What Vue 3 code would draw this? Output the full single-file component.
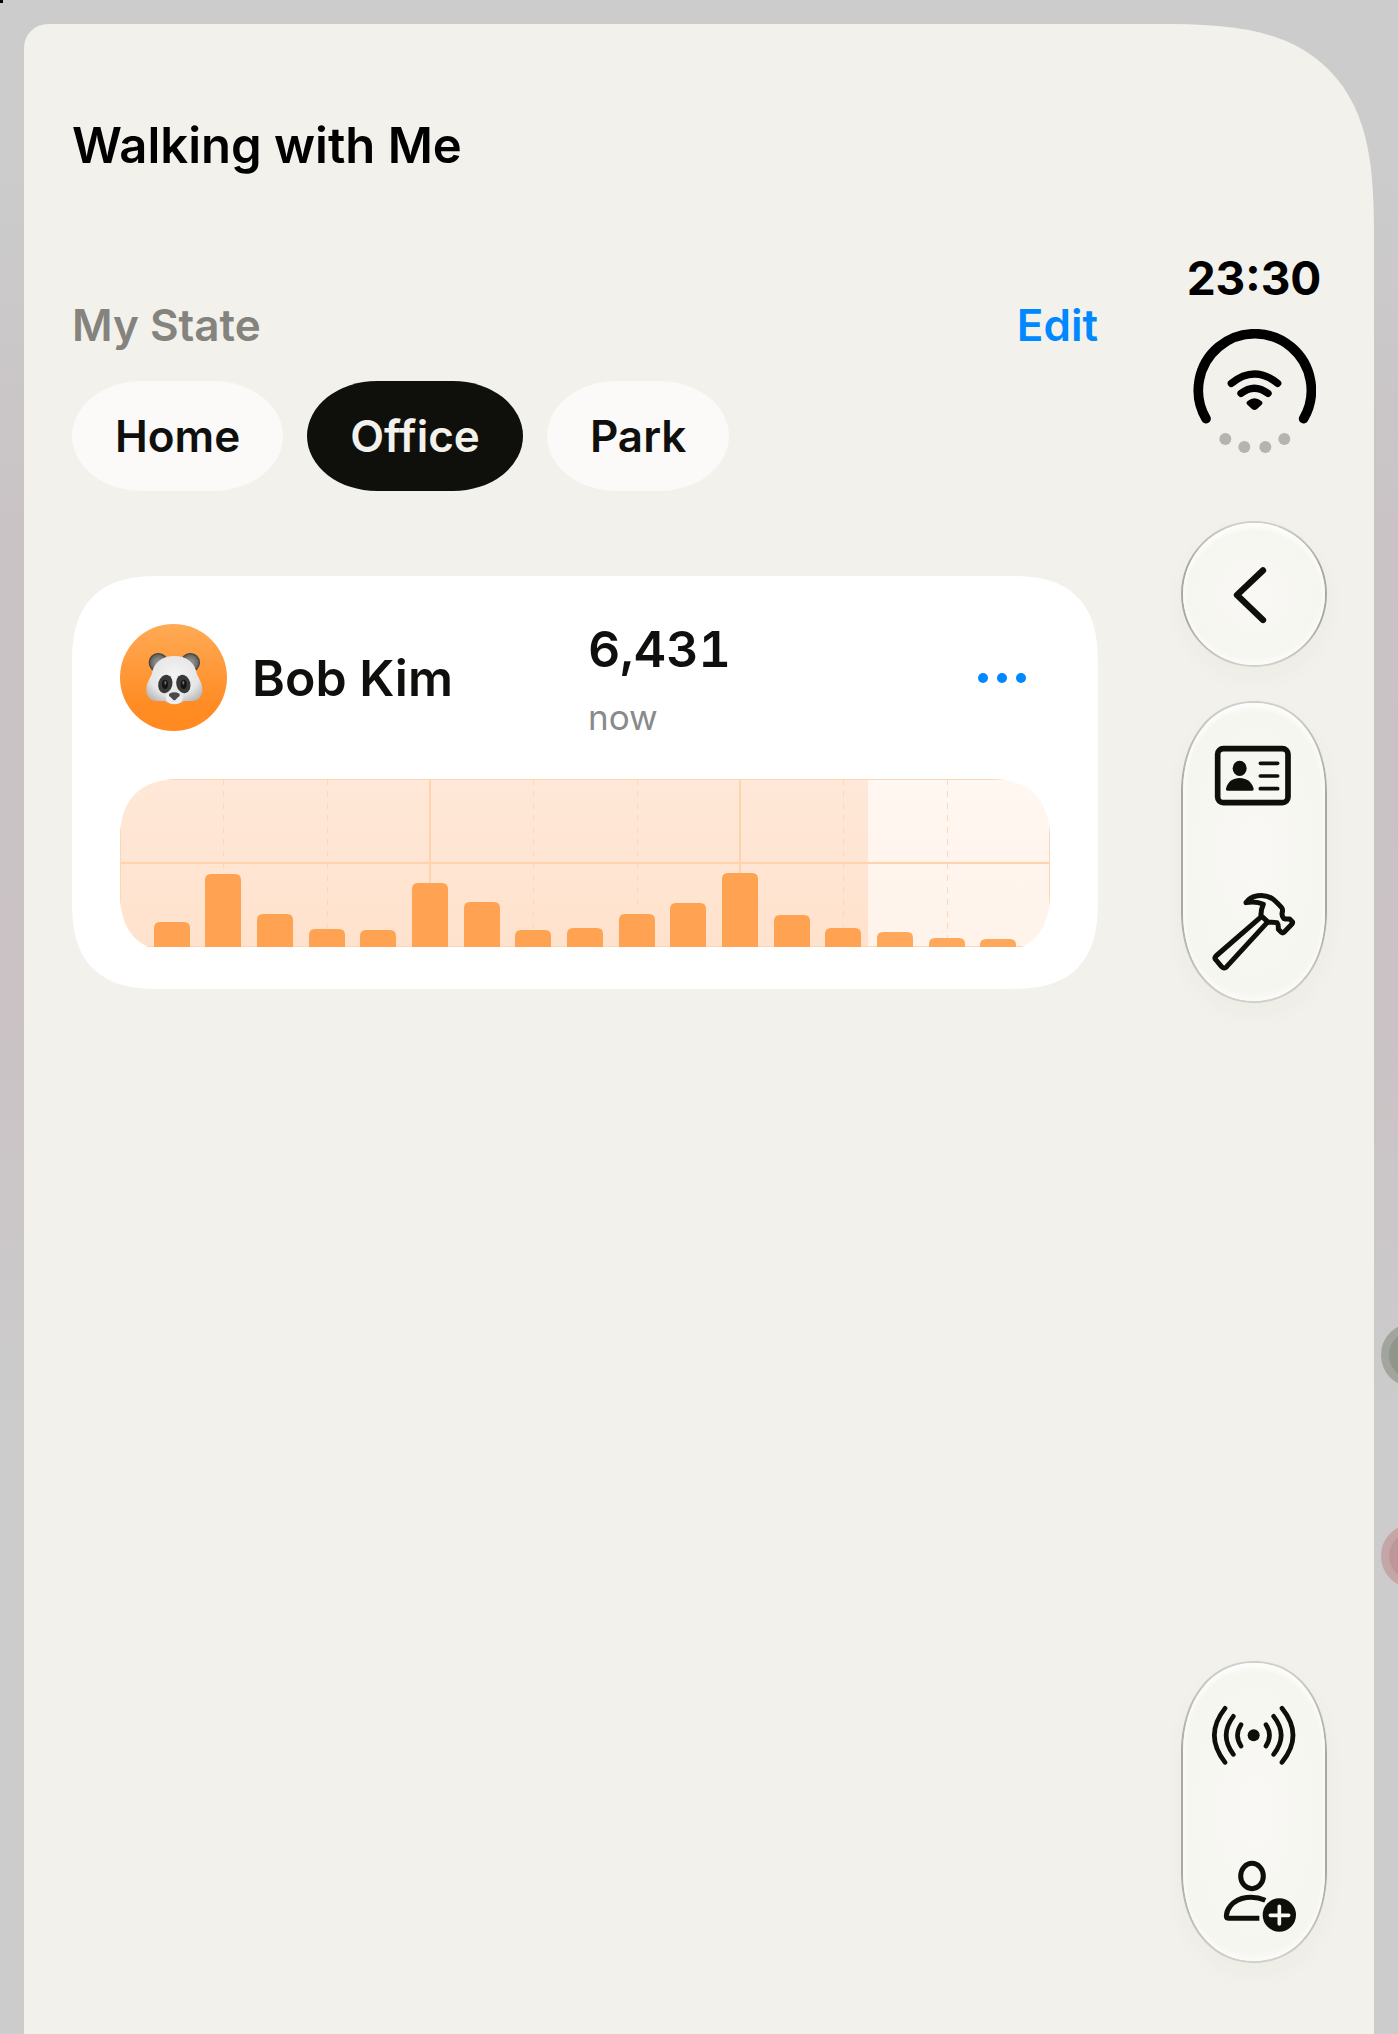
<script setup>
import { ref } from 'vue'

const places = ['Home', 'Office', 'Park']
const current = ref('Office')

const step = 930 / 18
const base = 168
const heights = [25, 73, 33, 18, 17, 64, 45, 17, 19, 33, 44, 74, 32, 19, 15, 9, 8]
const bars = heights.map((h, i) => {
  const x = Math.round(step * (i + 1)) - 18
  const top = base - h
  return `M${x} ${base}V${top + 6}Q${x} ${top} ${x + 6} ${top}H${x + 30}Q${x + 36} ${top} ${x + 36} ${top + 6}V${base}Z`
})
const minorLines = [2, 4, 8, 10, 14, 16].map((n) => Math.round(step * n))
const majorLines = [6, 12].map((n) => Math.round(step * n))
</script>

<template>
  <div class="backdrop">
    <span class="speck"></span>
    <span class="orb orb-green"></span>
    <span class="orb orb-red"></span>

    <div class="sheet">
      <main class="content">
        <h1 class="title">Walking with Me</h1>

        <section class="state">
          <div class="state-head">
            <h2 class="state-label">My State</h2>
            <button class="edit" type="button">Edit</button>
          </div>
          <div class="places">
            <button
              v-for="place in places"
              :key="place"
              type="button"
              class="place"
              :class="{ active: place === current }"
              :aria-pressed="place === current"
              @click="current = place"
            >{{ place }}</button>
          </div>
        </section>

        <article class="card">
          <div class="card-head">
            <div class="person">
              <svg class="avatar" viewBox="30 42 321 321" role="img" aria-label="Panda">
                <defs>
                  <linearGradient id="avatarFill" x1="0" y1="0" x2="0" y2="1">
                    <stop offset="0" stop-color="#ffaa56" />
                    <stop offset="0.75" stop-color="#ff8c24" />
                    <stop offset="1" stop-color="#ff8a20" />
                  </linearGradient>
                  <radialGradient id="faceFill" cx="0.5" cy="0.4" r="0.62">
                    <stop offset="0" stop-color="#f4f4f4" />
                    <stop offset="0.7" stop-color="#e6e6e7" />
                    <stop offset="1" stop-color="#bdbdc0" />
                  </radialGradient>
                  <radialGradient id="earFill">
                    <stop offset="0.3" stop-color="#8b8b88" />
                    <stop offset="0.75" stop-color="#6d6c69" />
                    <stop offset="1" stop-color="#343433" />
                  </radialGradient>
                </defs>
                <circle cx="190.5" cy="202.5" r="160.5" fill="url(#avatarFill)" />
                <circle cx="145" cy="158" r="29" fill="url(#earFill)" />
                <circle cx="241" cy="158" r="29" fill="url(#earFill)" />
                <path d="M193 138C232 138 254 158 260 190C265 206 277 217 277 239C277 262 262 273 240 273H221C213 284 173 284 165 273H146C124 273 109 262 109 239C109 217 121 206 126 190C132 158 154 138 193 138Z" fill="url(#faceFill)" />
                <ellipse cx="166" cy="222" rx="21" ry="28" transform="rotate(14 166 222)" fill="#39393a" />
                <ellipse cx="220" cy="222" rx="21" ry="28" transform="rotate(-14 220 222)" fill="#39393a" />
                <ellipse cx="165" cy="223" rx="9" ry="14" fill="#141414" />
                <ellipse cx="221" cy="223" rx="9" ry="14" fill="#141414" />
                <ellipse cx="166" cy="218" rx="3" ry="6" fill="#6a6a6a" />
                <ellipse cx="220" cy="218" rx="3" ry="6" fill="#6a6a6a" />
                <ellipse cx="193" cy="264" rx="26" ry="19" fill="#ededee" />
                <path d="M178 251Q193 243 208 251Q212 256 204 262L196 270Q193 272 190 270L182 262Q174 256 178 251Z" fill="#4a4a4a" />
              </svg>
              <h3 class="name">Bob Kim</h3>
            </div>
            <div class="steps">
              <span class="count">6,431</span>
              <span class="when">now</span>
            </div>
            <button class="more" type="button" aria-label="More">
              <svg viewBox="0 0 48 12" width="48" height="12" aria-hidden="true">
                <circle cx="5" cy="6" r="5" /><circle cx="24" cy="6" r="5" /><circle cx="43" cy="6" r="5" />
              </svg>
            </button>
          </div>

          <svg class="chart" viewBox="0 0 930 168" role="img" aria-label="Steps through the day">
            <defs>
              <clipPath id="plot">
                <path d="M60 0H870C910 0 930 20 930 60V114C930 154 910 174 870 174H60C20 174 0 154 0 114V60C0 20 20 0 60 0Z" />
              </clipPath>
              <linearGradient id="past" x1="0" y1="0" x2="0" y2="1">
                <stop offset="0" stop-color="#ffe8d8" />
                <stop offset="1" stop-color="#ffe2cd" />
              </linearGradient>
              <linearGradient id="ahead" x1="0" y1="0" x2="0" y2="1">
                <stop offset="0" stop-color="#fff7f1" />
                <stop offset="1" stop-color="#fff3ea" />
              </linearGradient>
            </defs>
            <g clip-path="url(#plot)">
              <rect width="748" height="168" fill="url(#past)" />
              <rect x="748" width="182" height="168" fill="url(#ahead)" />
              <path v-for="x in minorLines" :key="x" :d="`M${x}.5 0V168`" class="minor" />
              <path v-for="x in majorLines" :key="x" :d="`M${x} 0V168`" class="major" />
              <path d="M0 84H930" class="major" />
              <path d="M0 .5H930M0 167.5H930M.5 0V168M929.5 0V168" class="edge" />
              <path v-for="(d, i) in bars" :key="i" :d="d" :class="i > 13 ? 'bar soft' : 'bar'" />
            </g>
          </svg>
        </article>
      </main>

      <aside class="rail">
        <time class="clock">23:30</time>
        <svg class="signal" viewBox="98 267 369 372" role="img" aria-label="Wi-Fi and battery">
          <path d="M137 536A169.500 169.500 0 1 1 430 536" fill="none" stroke="#000" stroke-width="29" stroke-linecap="round" />
          <path d="M213 430Q282 374 352 430" fill="none" stroke="#000" stroke-width="22" stroke-linecap="round" />
          <path d="M242 460Q282 429 323 460" fill="none" stroke="#000" stroke-width="22" stroke-linecap="round" />
          <path d="M262 483Q283 466 303 483Q310 489 303 495L290 507Q282.500 513 275 507L262 495Q255 489 262 483Z" />
          <g fill="#b5b4b0">
            <circle cx="195" cy="597" r="18" /><circle cx="252" cy="621" r="18" />
            <circle cx="315" cy="621" r="18" /><circle cx="372" cy="597" r="18" />
          </g>
        </svg>

        <button class="glass round" type="button" aria-label="Back">
          <svg class="icon" viewBox="138 138 288 288" aria-hidden="true">
            <path d="M309 211L231 285L309 360" class="line" stroke-width="19" />
          </svg>
        </button>

        <div class="glass capsule">
          <button class="tool" type="button" aria-label="Profile card">
            <svg class="icon" viewBox="138 -2 288 288" aria-hidden="true">
              <rect x="173" y="54" width="211" height="162" rx="17" class="line" stroke-width="17" />
              <ellipse cx="239" cy="113" rx="21" ry="23" />
              <path d="M202 180Q197 180 198 174C203 152 220 142 239 142C258 142 275 152 281 174Q282 180 276 180Z" />
              <path d="M301 98H353M301 136H353M301 174H353" class="line" stroke-width="11" />
            </svg>
          </button>
          <button class="tool" type="button" aria-label="Tools">
            <svg class="icon" viewBox="138 446 288 288" aria-hidden="true">
              <path d="M304 559L168 677Q162 683 168 689L184 708Q192 717 200 709L322 576" class="line" stroke-width="15" />
              <path d="M258 517C272 494 311 488 337 505Q344 509 365 532Q369 536 367 545Q364 556 371 564Q378 567 389 566L397 574Q399 577 396 581L372 606Q368 609 364 606L355 597Q356 583 351 577Q341 575 325 576L303 556Q302 540 310 522Q287 511 258 517Z" class="line" stroke-width="15" />
            </svg>
          </button>
        </div>

        <div class="glass capsule bottom">
          <button class="tool" type="button" aria-label="Broadcast">
            <svg class="icon" viewBox="138 149 288 288" aria-hidden="true">
              <circle cx="281" cy="285" r="18" />
              <path d="M243 253Q222 285 243 317M220 228Q177 285 220 342M195 204Q131 285 195 366M318 253Q339 285 318 317M341 228Q386 285 341 342M366 204Q432 285 366 366" class="line" stroke-width="14" />
            </svg>
          </button>
          <button class="tool" type="button" aria-label="Add person">
            <svg class="icon" viewBox="138 598 288 288" aria-hidden="true">
              <ellipse cx="276" cy="709" rx="34" ry="38" class="line" stroke-width="15" />
              <path d="M316 782C280 766 236 770 212 798Q200 812 199 828Q199 836 207 836H298" fill="none" stroke="#0f0f0a" stroke-width="15" />
              <circle cx="358" cy="826" r="50" />
              <path d="M331 827H386M358 800V853" fill="none" stroke="#f8f8f4" stroke-width="11" stroke-linecap="round" />
            </svg>
          </button>
        </div>
      </aside>
    </div>
  </div>
</template>

<style>
body {
  background: #cccccc;
}
</style>

<style scoped>
* {
  box-sizing: border-box;
}

.backdrop {
  position: relative;
  display: flex;
  min-height: 100vh;
  padding: 24px 24px 0;
  overflow: hidden;
  background: linear-gradient(#cccccc 8%, #c9c3c5 26%, #cac2c4 50%, #cccccc 70%);
  font-family: Inter, "Liberation Sans", sans-serif;
  color: #0f0f0d;
}

.speck {
  position: absolute;
  top: 0;
  left: 0;
  width: 3px;
  height: 3px;
  background: #000;
}

.orb {
  position: absolute;
  right: -47px;
  width: 64px;
  height: 64px;
  border-radius: 50%;
}

.orb-green {
  top: 1323px;
  border: 8px solid #a2a59d;
  background: #90968a;
}

.orb-red {
  top: 1524px;
  border: 8px solid #c4a6a9;
  background: #bd9799;
}

button {
  margin: 0;
  padding: 0;
  border: 0;
  background: none;
  font: inherit;
  color: inherit;
  cursor: pointer;
}

h1, h2, h3 {
  margin: 0;
}

.sheet {
  position: relative;
  display: flex;
  flex: 1;
  gap: 83px;
  padding: 0 47px 0 48px;
  border-radius: 24px 216px 0 0;
  corner-shape: round superellipse(1.55) round round;
  background: #f2f1eb;
}

.content {
  flex: 1;
  min-width: 0;
  padding-top: 92px;
}

.title {
  font-size: 49px;
  line-height: 60px;
  font-weight: 600;
  color: #000;
}

.state {
  margin-top: 123px;
}

.state-head {
  display: flex;
  justify-content: space-between;
  font-size: 44px;
  line-height: 52px;
}

.state-label {
  font-size: 44px;
  font-weight: 600;
  color: #84837e;
}

.edit {
  font-weight: 600;
  color: #0088ff;
}

.places {
  display: flex;
  gap: 24px;
  margin-top: 30px;
}

.place {
  height: 110px;
  padding: 0 43px;
  border-radius: 70px / 55px;
  background: #fbfaf8;
  font-size: 44px;
  font-weight: 600;
}

.place.active {
  background: #0f100b;
  color: #f2f1eb;
}

.card {
  margin-top: 85px;
  padding: 40px 48px 42px;
  border-radius: 90px;
  corner-shape: superellipse(1.4);
  background: #fff;
}

.card-head {
  display: grid;
  grid-template-columns: 1fr 1fr;
  column-gap: 6px;
  align-items: center;
  position: relative;
}

.person {
  display: flex;
  align-items: center;
  gap: 25px;
}

.avatar {
  width: 107px;
  height: 107px;
}

.name {
  font-size: 50px;
  line-height: 60px;
  font-weight: 600;
}

.steps {
  display: flex;
  flex-direction: column;
  gap: 13px;
}

.count {
  font-size: 50px;
  line-height: 66px;
  font-weight: 600;
  font-variant-numeric: tabular-nums;
}

.when {
  font-size: 35px;
  line-height: 44px;
  color: #8a8a8a;
}

.more {
  position: absolute;
  right: 0;
  display: grid;
  place-items: center;
  width: 96px;
  height: 96px;
  fill: #0088ff;
}

.chart {
  display: block;
  width: 100%;
  margin-top: 40px;
}

.minor {
  stroke: #fcd9bd;
  stroke-width: 1;
  stroke-dasharray: 6 6;
}

.major {
  stroke: #ffd3ac;
  stroke-width: 2;
}

.edge {
  fill: none;
  stroke: #fdd6b6;
}

.bar {
  fill: #ffa252;
}

.bar.soft {
  fill: #ffa75b;
}

.rail {
  display: flex;
  flex-direction: column;
  align-items: center;
  width: 146px;
  padding: 225px 0 71px;
}

.clock {
  font-size: 46px;
  line-height: 58px;
  font-weight: 700;
  color: #000;
}

.signal {
  width: 123px;
  height: 124px;
  margin-top: 22px;
}

.glass {
  width: 146px;
  border: 2px solid transparent;
  background:
    radial-gradient(closest-side, #f9f8f5, #f6f6f0) padding-box,
    linear-gradient(#d2d1cd, #a9a8a4 30%, #a9a8a4 70%, #d2d1cd) border-box;
  box-shadow: 0 10px 24px rgba(60, 60, 40, 0.03), inset 0 5px 5px #fdfdfb, inset 0 -4px 5px #fbfbf9;
}

.round {
  display: grid;
  flex: none;
  place-items: center;
  height: 146px;
  margin-top: 68px;
  border-radius: 50%;
}

.capsule {
  display: flex;
  flex: none;
  flex-direction: column;
  height: 302px;
  margin-top: 34px;
  border-radius: 73px / 92px;
  corner-shape: superellipse(1.1);
}

.capsule.bottom {
  margin-top: auto;
}

.tool {
  display: grid;
  flex: 1;
  place-items: center;
}

.icon {
  width: 96px;
  height: 96px;
  fill: #0f0f0a;
}

.line {
  fill: none;
  stroke: #0f0f0a;
  stroke-linecap: round;
  stroke-linejoin: round;
}
</style>
